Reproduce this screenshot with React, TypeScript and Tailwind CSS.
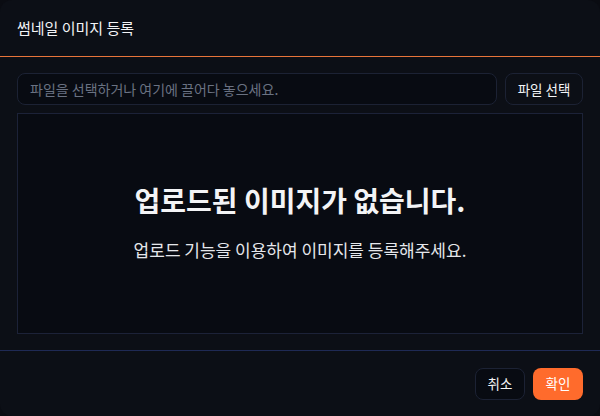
import React from 'react';

const font = { fontFamily: '"Noto Sans CJK KR", "Noto Sans", sans-serif' };

export default function App() {
  return (
    <div className="w-[600px] h-[416px] bg-[#0a0c12]" style={font}>
      <div className="flex h-full flex-col rounded-xl bg-[#0c0f16] text-gray-100">
        <header className="flex h-[57px] shrink-0 items-center border-b border-[#e8743a] px-[17px]">
          <h2 className="text-[15px] text-gray-100">썸네일 이미지 등록</h2>
        </header>

        <div className="flex flex-1 flex-col gap-2 px-[17px] pt-4 pb-4">
          <div className="flex gap-2">
            <div className="flex h-[32px] flex-1 items-center rounded-lg border border-[#1c2234] bg-[#080b12] px-3 text-[14px] text-gray-500">
              파일을 선택하거나 여기에 끌어다 놓으세요.
            </div>
            <button className="h-[32px] w-[78px] rounded-lg border border-[#1c2234] bg-[#0c0f16] text-[13.5px] text-gray-100">
              파일 선택
            </button>
          </div>

          <div className="flex flex-1 flex-col items-center justify-center gap-[16px] border border-[#1c2238] bg-[#080b12] pb-[5px]">
            <p className="text-[28px] font-bold text-gray-100">업로드된 이미지가 없습니다.</p>
            <p className="text-[17px] text-gray-200">업로드 기능을 이용하여 이미지를 등록해주세요.</p>
          </div>
        </div>

        <footer className="flex h-[66px] shrink-0 items-center justify-end gap-2 border-t border-[#1f2a55] px-[17px]">
          <button className="h-[32px] w-[50px] rounded-lg border border-[#1c2234] bg-[#080b12] text-[13.5px] text-gray-100">
            취소
          </button>
          <button className="h-[32px] w-[50px] rounded-lg bg-[#ff6b2c] text-[13.5px] text-white">
            확인
          </button>
        </footer>
      </div>
    </div>
  );
}
